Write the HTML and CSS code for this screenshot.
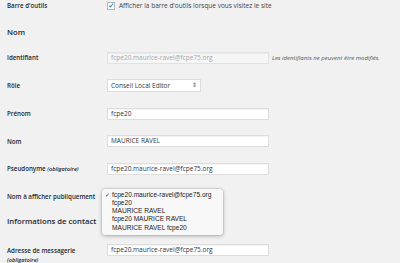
FILE: index.html
```html
<!DOCTYPE html>
<html lang="fr">
<head>
    <meta charset="UTF-8">
    <title>Profil</title>
    <link rel="stylesheet" href="styles.css">
</head>
<body>
    <div class="wrap">
        <div class="field field-toolbar">
            <span class="label">Barre d'outils</span>
            <label class="check-line">
                <span class="checkbox">
                    <svg width="7" height="7" viewBox="0 0 7 7"><path d="M1.3 3.6 L2.9 5.2 L5.9 1.2" fill="none" stroke="#1e8cbe" stroke-width="1.2"/></svg>
                </span>
                Afficher la barre d'outils lorsque vous visitez le site
            </label>
        </div>

        <h2 class="section-title title-name">Nom</h2>

        <div class="field">
            <span class="label">Identifiant</span>
            <span class="input disabled">fcpe20.maurice-ravel@fcpe75.org</span>
            <span class="note">Les identifiants ne peuvent être modifiés.</span>
        </div>
        <div class="field">
            <span class="label">Rôle</span>
            <span class="select">Conseil Local Editor <span class="arrows">&#8661;</span></span>
        </div>
        <div class="field">
            <span class="label">Prénom</span>
            <span class="input">fcpe20</span>
        </div>
        <div class="field">
            <span class="label">Nom</span>
            <span class="input">MAURICE RAVEL</span>
        </div>
        <div class="field">
            <span class="label">Pseudonyme <em>(obligatoire)</em></span>
            <span class="input">fcpe20.maurice-ravel@fcpe75.org</span>
        </div>
        <div class="field field-display">
            <span class="label">Nom à afficher publiquement</span>
            <!-- select is hidden under its open menu -->
            <span class="select"></span>
            <ul class="menu">
                <li class="selected"><span class="tick">&#10003;</span>fcpe20.maurice-ravel@fcpe75.org</li>
                <li>fcpe20</li>
                <li>MAURICE RAVEL</li>
                <li>fcpe20 MAURICE RAVEL</li>
                <li>MAURICE RAVEL fcpe20</li>
            </ul>
        </div>

        <h2 class="section-title title-contact">Informations de contact</h2>

        <div class="field field-email">
            <span class="label">Adresse de messagerie<br><em>(obligatoire)</em></span>
            <span class="input">fcpe20.maurice-ravel@fcpe75.org</span>
        </div>
    </div>
</body>
</html>
```

FILE: styles.css
```css
body {
    margin: 0;
    background-color: #f1f1f1;
    font-family: 'Open Sans', 'Liberation Sans', sans-serif;
    color: #23282d;
    font-size: 6.5px;
    overflow: hidden;
}

.wrap {
    padding-left: 7px;
}

.field {
    display: flex;
    align-items: center;
    padding: 7.75px 0;
    position: relative;
}

.label {
    width: 100px;
    flex-shrink: 0;
    font-size: 6.2px;
    font-weight: 600;
    line-height: 9px;
}

.label em {
    font-size: 5.6px;
}

.field-toolbar {
    padding: 1px 0 0;
    height: 9px;
}

.check-line {
    display: flex;
    align-items: center;
    color: #444;
}

.checkbox {
    width: 6px;
    height: 6px;
    border: 1px solid #b4b9be;
    background: #fff;
    margin-right: 4px;
    display: flex;
    align-items: center;
    justify-content: center;
}

.section-title {
    font-size: 7.7px;
    font-weight: 600;
    line-height: 12px;
    margin: 0;
}

.title-name {
    margin: 16px 0 6px;
}

.title-contact {
    margin: 4px 0 9px;
}

.input {
    box-sizing: border-box;
    width: 162px;
    height: 12px;
    line-height: 10px;
    padding: 0 3px;
    background: #fff;
    border: 1px solid #ddd;
    box-shadow: inset 0 1px 1px rgba(0, 0, 0, 0.05);
    color: #32373c;
    white-space: nowrap;
    overflow: hidden;
}

.input.disabled {
    background: #f6f6f6;
    border-color: #e2e2e2;
    color: #a6a9ac;
}

.note {
    margin-left: 3px;
    font-style: italic;
    font-size: 6px;
    color: #555;
}

.select {
    box-sizing: border-box;
    width: 94px;
    height: 13px;
    line-height: 11px;
    padding: 0 3px;
    background: #fff;
    border: 1px solid #ddd;
    color: #32373c;
    display: flex;
    justify-content: space-between;
}

.arrows {
    font-size: 6px;
    color: #555;
}

.field-display .select {
    width: 110px;
}

.menu {
    position: absolute;
    left: 95px;
    top: 6px;
    width: 121px;
    margin: 0;
    padding: 2px 0 3px;
    list-style: none;
    background: #f8f8f8;
    border-radius: 3px;
    box-shadow: 0 1px 4px rgba(0, 0, 0, 0.28), 0 0 0 0.5px rgba(0, 0, 0, 0.12);
    font-family: 'Liberation Sans', Arial, sans-serif;
    font-size: 6.6px;
    color: #222;
}

.menu li {
    height: 8.3px;
    line-height: 8.3px;
    padding-left: 10px;
    position: relative;
}

.menu .tick {
    position: absolute;
    left: 3px;
    font-size: 6px;
}

.field-email {
    align-items: flex-start;
}

.field-email .label {
    margin-top: 2px;
}
```
